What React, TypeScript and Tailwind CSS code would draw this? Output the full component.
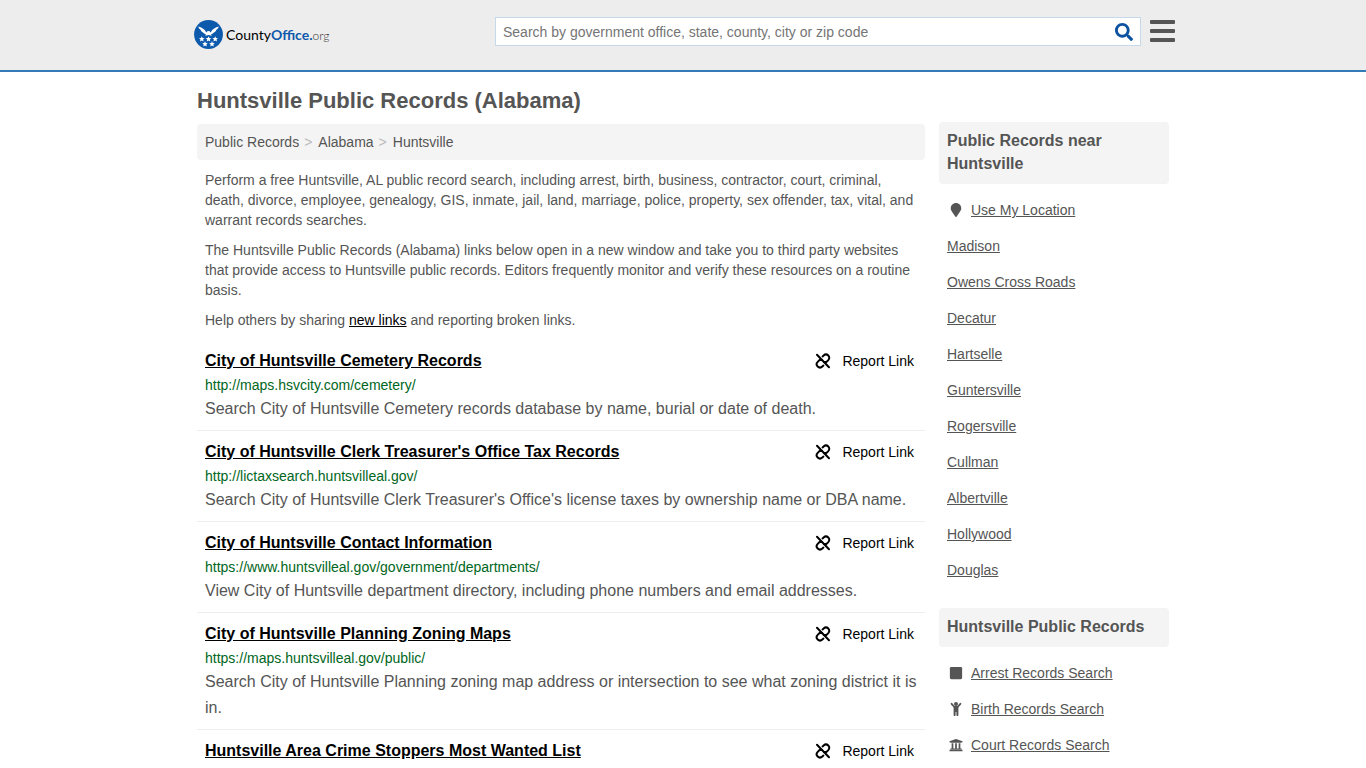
import React, { useState, ChangeEvent } from "react";
import { FaMapMarker, FaSearch, FaSquare, FaUniversity } from "react-icons/fa";

type RecordLink = {
  title: string;
  url?: string;
  description?: string;
};

type SideLink = {
  label: string;
  icon?: React.ComponentType<{ className?: string }>;
};

const UnlinkIcon = ({ className }: { className?: string }) => (
  <svg
    viewBox="0 0 16 16"
    className={className}
    fill="none"
    stroke="currentColor"
    strokeWidth="2"
    strokeLinecap="round"
    aria-hidden="true"
  >
    <path d="M2 1.8 L14 14.2" />
    <path d="M7.6 3.4 L8.6 2.5 C10 1.2 12 1.2 13.3 2.5 C14.6 3.8 14.6 5.8 13.3 7.1 L11.2 9.1 L8.9 8.9" />
    <path d="M8.4 12.6 L7.4 13.5 C6 14.8 4 14.8 2.7 13.5 C1.4 12.2 1.4 10.2 2.7 8.9 L4.8 6.9 L7.1 7.1" />
  </svg>
);

const ChildIcon = ({ className }: { className?: string }) => (
  <svg viewBox="0 0 14 14" className={className} fill="currentColor" aria-hidden="true">
    <circle cx="7" cy="2" r="2" />
    <path
      d="M2.6 1.8 L5.4 5 H8.6 L11.4 1.8"
      fill="none"
      stroke="currentColor"
      strokeWidth="1.8"
      strokeLinecap="round"
      strokeLinejoin="round"
    />
    <path d="M4.6 4.6 H9.4 V13.2 A0.8 0.8 0 0 1 8.6 14 H8.2 A0.8 0.8 0 0 1 7.4 13.2 V10 H6.6 V13.2 A0.8 0.8 0 0 1 5.8 14 H5.4 A0.8 0.8 0 0 1 4.6 13.2 Z" />
  </svg>
);

const breadcrumbs = ["Public Records", "Alabama", "Huntsville"];

const records: RecordLink[] = [
  {
    title: "City of Huntsville Cemetery Records",
    url: "http://maps.hsvcity.com/cemetery/",
    description: "Search City of Huntsville Cemetery records database by name, burial or date of death.",
  },
  {
    title: "City of Huntsville Clerk Treasurer's Office Tax Records",
    url: "http://lictaxsearch.huntsvilleal.gov/",
    description: "Search City of Huntsville Clerk Treasurer's Office's license taxes by ownership name or DBA name.",
  },
  {
    title: "City of Huntsville Contact Information",
    url: "https://www.huntsvilleal.gov/government/departments/",
    description: "View City of Huntsville department directory, including phone numbers and email addresses.",
  },
  {
    title: "City of Huntsville Planning Zoning Maps",
    url: "https://maps.huntsvilleal.gov/public/",
    description: "Search City of Huntsville Planning zoning map address or intersection to see what zoning district it is in.",
  },
  {
    title: "Huntsville Area Crime Stoppers Most Wanted List",
  },
];

const nearbyLinks: SideLink[] = [
  { label: "Use My Location", icon: FaMapMarker },
  { label: "Madison" },
  { label: "Owens Cross Roads" },
  { label: "Decatur" },
  { label: "Hartselle" },
  { label: "Guntersville" },
  { label: "Rogersville" },
  { label: "Cullman" },
  { label: "Albertville" },
  { label: "Hollywood" },
  { label: "Douglas" },
];

const recordTypeLinks: SideLink[] = [
  { label: "Arrest Records Search", icon: FaSquare },
  { label: "Birth Records Search", icon: ChildIcon },
  { label: "Court Records Search", icon: FaUniversity },
];

const STAR = "M0 -2.8 L0.8 -0.9 L2.8 -0.8 L1.3 0.5 L1.8 2.4 L0 1.4 L-1.8 2.4 L-1.3 0.5 L-2.8 -0.8 L-0.8 -0.9 Z";

const starPositions = [
  [7.8, 19],
  [14.5, 19],
  [21.2, 19],
  [11, 24],
  [18, 24],
];

const Logo = () => (
  <a href="#" className="flex items-center gap-[3px] text-black">
    <svg viewBox="0 0 29 29" className="h-[29px] w-[29px]" aria-hidden="true">
      <circle cx="14.5" cy="14.5" r="14.4" fill="#0d59ab" />
      <g fill="#fff">
        <path d="M4.2 6.6 C7.6 7.6 10.4 9 12.4 12.4 L13.2 11.2 L15.4 11 L16.6 12.4 C18.6 9 21.4 7.6 24.8 6.6 C24.4 8.2 23.4 9.4 22.2 10 C21.8 11.4 20.8 12.3 19.6 12.7 C19 13.6 18 14.2 16.8 14.4 L18 15.8 L14.5 15.1 L11 15.8 L12.2 14.4 C11 14.2 10 13.6 9.4 12.7 C8.2 12.3 7.2 11.4 6.8 10 C5.6 9.4 4.6 8.2 4.2 6.6 Z" />
        {starPositions.map(([x, y]) => (
          <path key={`${x}-${y}`} d={STAR} transform={`translate(${x} ${y})`} />
        ))}
      </g>
    </svg>
    <span className="font-['Lato',sans-serif] text-sm">
      County<span className="font-bold text-[#0d59ab]">Office.</span>
      <span className="text-xs font-light text-[#333]">org</span>
    </span>
  </a>
);

const Header = () => {
  const [query, setQuery] = useState("");

  const handleQueryChange = (event: ChangeEvent<HTMLInputElement>) => {
    setQuery(event.target.value);
  };

  return (
    <header className="border-b-2 border-[#337ab7] bg-[#ededed]">
      <div className="mx-auto flex h-[70px] max-w-[984px] items-start justify-between">
        <div className="pl-[3px] pt-5">
          <Logo />
        </div>
        <div className="flex w-[680px] items-start gap-[9px] pt-[17px]">
          <form className="flex h-[29px] grow items-center border border-[#c5d9ea] bg-white">
            <input
              type="text"
              aria-label="Search"
              placeholder="Search by government office, state, county, city or zip code"
              value={query}
              onChange={handleQueryChange}
              className="h-full grow px-[7px] text-sm text-[#555] outline-none placeholder:text-[#757575]"
            />
            <button type="button" aria-label="Submit search" className="px-[7px] text-[#0d52a0]">
              <FaSearch className="h-[18px] w-[18px]" />
            </button>
          </form>
          <button type="button" aria-label="Menu" className="flex w-[25px] flex-col gap-[5px] pt-[3px]">
            <span className="h-1 w-full rounded-[1px] bg-[#555]" />
            <span className="h-1 w-full rounded-[1px] bg-[#555]" />
            <span className="h-1 w-full rounded-[1px] bg-[#555]" />
          </button>
        </div>
      </div>
    </header>
  );
};

const RecordItem = ({ title, url, description }: RecordLink) => (
  <li className="border-b border-[#eee] px-2 pb-2 pt-2 last:border-b-0 last:pb-0">
    <div className="flex items-center justify-between pr-[3px]">
      <h2 className="text-base leading-[26px] font-bold">
        <a href="#" className="text-black underline">
          {title}
        </a>
      </h2>
      <a href="#" className="flex items-center gap-[11px] text-sm text-black">
        <UnlinkIcon className="h-4 w-4" />
        Report Link
      </a>
    </div>
    {url && <p className="text-sm leading-[22px] text-[#006621]">{url}</p>}
    {description && <p className="text-base leading-[26px]">{description}</p>}
  </li>
);

const SideSection = ({ title, links }: { title: string; links: SideLink[] }) => (
  <section>
    <h2 className="rounded bg-[#f4f4f4] px-2 pt-[7px] pb-[9px] text-base leading-[23px] font-bold">{title}</h2>
    <ul className="px-2 pt-2">
      {links.map(({ label, icon: Icon }) => (
        <li key={label} className="flex h-9 items-center gap-1.5 text-sm">
          {Icon && (
            <span className="flex w-[18px] justify-center">
              <Icon className="h-[14px] w-[14px]" />
            </span>
          )}
          <a href="#" className="underline">
            {label}
          </a>
        </li>
      ))}
    </ul>
  </section>
);

export default function App() {
  return (
    <div className="bg-white font-['Liberation_Sans',Arial,sans-serif] text-[#555]">
      <Header />
      <div className="mx-auto max-w-[972px]">
        <h1 className="pt-[13px] text-[22px] leading-8 font-bold">Huntsville Public Records (Alabama)</h1>
        <div className="flex items-start gap-[14px]">
          <main className="min-w-0 grow pt-[7px]">
            <nav aria-label="Breadcrumb" className="rounded bg-[#f4f4f4] px-2 py-2 text-sm">
              <ol className="flex">
                {breadcrumbs.map((crumb, index) => (
                  <li key={crumb}>
                    {index > 0 && <span className="pr-1.5 pl-[5px] text-[#bbb]">&gt;</span>}
                    <a href="#">{crumb}</a>
                  </li>
                ))}
              </ol>
            </nav>
            <div className="flex flex-col gap-[10px] px-2 py-[10px] text-sm">
              <p>
                Perform a free Huntsville, AL public record search, including arrest, birth, business, contractor,
                court, criminal, death, divorce, employee, genealogy, GIS, inmate, jail, land, marriage, police,
                property, sex offender, tax, vital, and warrant records searches.
              </p>
              <p>
                The Huntsville Public Records (Alabama) links below open in a new window and take you to third party
                websites that provide access to Huntsville public records. Editors frequently monitor and verify these
                resources on a routine basis.
              </p>
              <p>
                Help others by sharing{" "}
                <a href="#" className="text-black underline">
                  new links
                </a>{" "}
                and reporting broken links.
              </p>
            </div>
            <ul>
              {records.map((record) => (
                <RecordItem key={record.title} {...record} />
              ))}
            </ul>
          </main>
          <aside className="flex w-[230px] shrink-0 flex-col gap-5 pt-[5px]">
            <SideSection title="Public Records near Huntsville" links={nearbyLinks} />
            <SideSection title="Huntsville Public Records" links={recordTypeLinks} />
          </aside>
        </div>
      </div>
    </div>
  );
}
